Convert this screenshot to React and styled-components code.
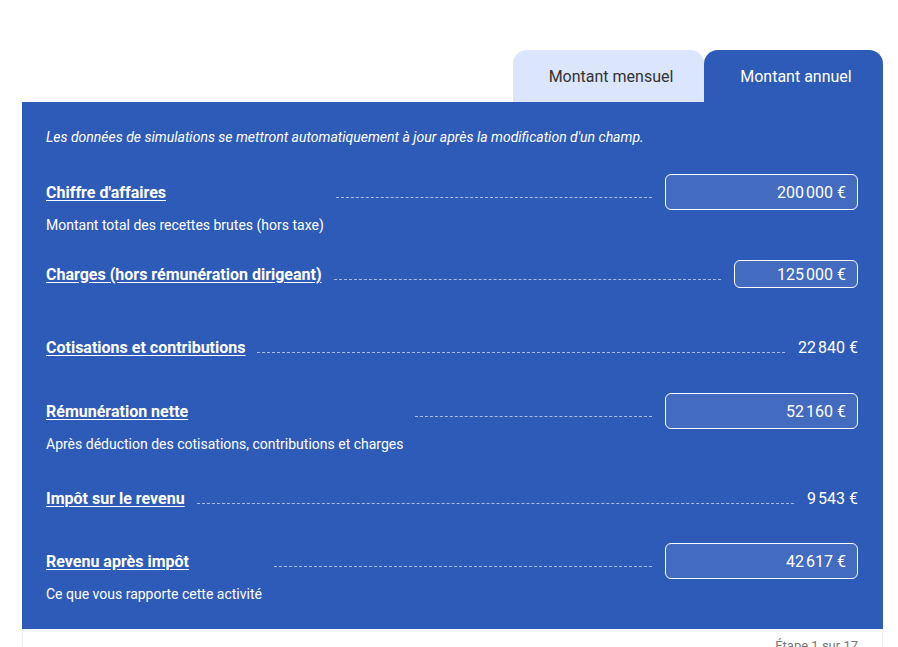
import React from "react";
import styled, { createGlobalStyle } from "styled-components";

const rows = [
  { label: "Chiffre d'affaires", desc: "Montant total des recettes brutes (hors taxe)", value: "200\u202f000 €", input: "large", mt: 0 },
  { label: "Charges (hors rémunération dirigeant)", value: "125\u202f000 €", input: "small", mt: 25 },
  { label: "Cotisations et contributions", value: "22\u202f840 €", mt: 41 },
  { label: "Rémunération nette", desc: "Après déduction des cotisations, contributions et charges", value: "52\u202f160 €", input: "large", mt: 28 },
  { label: "Impôt sur le revenu", value: "9\u202f543 €", mt: 26 },
  { label: "Revenu après impôt", desc: "Ce que vous rapporte cette activité", value: "42\u202f617 €", input: "large", mt: 27 },
];

function App() {
  return (
    <>
      <GlobalStyle />
      <Page>
        <Tabs>
          <Tab>Montant mensuel</Tab>
          <Tab $active>Montant annuel</Tab>
        </Tabs>
        <Panel>
          <Intro>
            Les données de simulations se mettront automatiquement à jour après la modification d'un champ.
          </Intro>
          {rows.map((row, index) => (
            <Row key={index} $mt={row.mt}>
              <LabelCol>
                <TopLine $small={row.input === "small"}>
                  <Label href="#">{row.label}</Label>
                </TopLine>
                {row.desc && <Desc>{row.desc}</Desc>}
              </LabelCol>
              <Dots $small={row.input === "small"} />
              {row.input ? (
                <Input $small={row.input === "small"}>{row.value}</Input>
              ) : (
                <Value>{row.value}</Value>
              )}
            </Row>
          ))}
        </Panel>
        <Footer>
          <Step>Étape 1 sur 17</Step>
        </Footer>
      </Page>
    </>
  );
}

const GlobalStyle = createGlobalStyle`
  body {
    margin: 0;
    background: #fff;
    font-family: Roboto, "Liberation Sans", sans-serif;
  }
`;

const Page = styled.div`
  padding: 50px 15px 0 22px;
`;

const Tabs = styled.div`
  display: flex;
  justify-content: flex-end;
`;

const Tab = styled.div`
  height: 52px;
  display: flex;
  align-items: center;
  justify-content: center;
  box-sizing: border-box;
  padding-left: 5px;
  width: ${(p) => (p.$active ? "179px" : "191px")};
  border-radius: 14px 14px 0 0;
  background: ${(p) => (p.$active ? "#2e5bb8" : "#dbe5fc")};
  color: ${(p) => (p.$active ? "#fff" : "#333")};
  font-size: 16px;
`;

const Panel = styled.div`
  background: #2e5bb8;
  color: #fff;
  padding: 26px 25px 26px 24px;
  height: 527px;
  box-sizing: border-box;
`;

const Intro = styled.p`
  margin: 0 0 28px;
  font-size: 14px;
  font-style: italic;
  line-height: 18px;
`;

const Row = styled.div`
  display: flex;
  align-items: flex-start;
  margin-top: ${(p) => p.$mt}px;
`;

const LabelCol = styled.div`
  display: flex;
  flex-direction: column;
`;

const TopLine = styled.div`
  height: ${(p) => (p.$small ? "28px" : "36px")};
  display: flex;
  align-items: center;
`;

const Label = styled.a`
  color: #fff;
  font-weight: 700;
  font-size: 16px;
  text-decoration: underline;
  text-underline-offset: 2px;
`;

const Desc = styled.div`
  font-size: 14px;
  margin-top: 5px;
  line-height: 20px;
`;

const Dots = styled.div`
  flex: 1;
  height: ${(p) => (p.$small ? "19px" : "23px")};
  border-bottom: 1px dashed rgba(255, 255, 255, 0.6);
  margin: 0 13px 0 12px;
`;

const Input = styled.div`
  width: ${(p) => (p.$small ? "124px" : "193px")};
  height: ${(p) => (p.$small ? "28px" : "36px")};
  box-sizing: border-box;
  border: 1px solid #fff;
  border-radius: 6px;
  background: rgba(255, 255, 255, 0.1);
  display: flex;
  align-items: center;
  justify-content: flex-end;
  padding: 0 11px;
  font-size: 16px;
`;

const Value = styled.div`
  height: 36px;
  display: flex;
  align-items: center;
  font-size: 16px;
`;

const Footer = styled.div`
  border: 1px solid #eee;
  border-top: 3px solid #f3f6fe;
  height: 60px;
  display: flex;
  justify-content: flex-end;
  padding: 6px 24px 0;
`;

const Step = styled.div`
  color: #777;
  font-size: 13px;
`;

export default App;
